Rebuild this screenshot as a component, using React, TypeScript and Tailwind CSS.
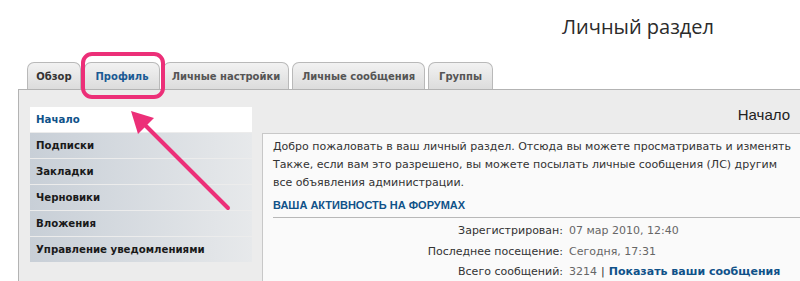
import React from "react";

const tabs = [
  { label: "Обзор", w: "w-[54px]", tone: "text-[#333333]" },
  { label: "Профиль", w: "w-[76px]", tone: "text-[#1b5a94]" },
  { label: "Личные настройки", w: "w-[126px]", tone: "text-[#555555]" },
  { label: "Личные сообщения", w: "w-[133px]", tone: "text-[#555555]" },
  { label: "Группы", w: "w-[65px]", tone: "text-[#555555]" },
];

const menu = ["Подписки", "Закладки", "Черновики", "Вложения", "Управление уведомлениями"];

const stats = [
  { k: "Зарегистрирован:", v: "07 мар 2010, 12:40" },
  { k: "Последнее посещение:", v: "Сегодня, 17:31" },
];

const App = () => {
  return (
    <div className="relative w-[800px] h-[281px] overflow-hidden bg-white font-['DejaVu_Sans',sans-serif]">
      <div className="flex justify-end pr-[86px] pt-[13px] h-[62px]">
        <h1 className="font-['Open_Sans',sans-serif] text-[20px] leading-[28px] text-[#2b2b2b]">
          Личный раздел
        </h1>
      </div>

      <div className="flex gap-[3px] pl-[27px] h-[27px]">
        {tabs.map((t) => (
          <div
            key={t.label}
            className={`${t.w} ${t.tone} flex items-center justify-center rounded-t-[7px] border border-b-0 border-[#b9b9b9] bg-gradient-to-b from-[#f2f2f2] to-[#dcdcdc] text-[10px] font-bold`}
          >
            {t.label}
          </div>
        ))}
      </div>

      <div className="ml-[18px] flex h-[192px] border-t border-l border-[#b3b3b3] bg-[#ececec]">
        <div className="w-[233px] shrink-0 pl-[11px] pt-[17px]">
          <div className="flex h-[25px] items-center bg-white pl-[6px] text-[10.2px] font-bold text-[#105289]">
            Начало
          </div>
          {menu.map((m) => (
            <div
              key={m}
              className="mt-px flex h-[25px] items-center bg-gradient-to-r from-[#c8cfd7] to-[#e7e9eb] pl-[6px] text-[10.2px] font-bold text-[#1a1a1a]"
            >
              {m}
            </div>
          ))}
        </div>

        <div className="ml-[10px] flex min-w-0 flex-1 flex-col">
          <div className="flex h-[43px] shrink-0 justify-end pr-[10px] pt-[16px] font-['Liberation_Sans',sans-serif] text-[15px] leading-[18px] text-[#222222]">
            Начало
          </div>
          <div className="flex-1 overflow-hidden border-t border-l border-[#c8c8c8] bg-[#fafafa] pl-[10px] pt-[4px] text-[11px] text-[#333333]">
            <p className="whitespace-nowrap leading-[18px]">
              Добро пожаловать в ваш личный раздел. Отсюда вы можете просматривать и изменять
              <br />
              Также, если вам это разрешено, вы можете посылать личные сообщения (ЛС) другим
              <br />
              все объявления администрации.
            </p>
            <div className="mt-[6px] border-b border-[#b8b8b8] pb-[5px] font-['Liberation_Sans',sans-serif] text-[11px] font-bold leading-[14px] text-[#105289]">
              ВАША АКТИВНОСТЬ НА ФОРУМАХ
            </div>
            <div className="mt-[3px] flex flex-col">
              {stats.map((s) => (
                <div key={s.k} className="flex h-[20.5px] items-center whitespace-nowrap">
                  <span className="w-[296px] shrink-0 pr-[6px] text-right">{s.k}</span>
                  <span className="text-[#666666]">{s.v}</span>
                </div>
              ))}
              <div className="flex h-[20.5px] items-center whitespace-nowrap">
                <span className="w-[296px] shrink-0 pr-[6px] text-right">Всего сообщений:</span>
                <span className="text-[#666666]">3214</span>
                <span className="px-[4px] text-[#333333]">|</span>
                <span className="font-bold text-[#105289]">Показать ваши сообщения</span>
              </div>
            </div>
          </div>
        </div>
      </div>

      <svg className="pointer-events-none absolute left-0 top-0" width="800" height="281">
        <rect x="83" y="54" width="80" height="43" rx="9" fill="none" stroke="#ec2f78" strokeWidth="4" />
        <line x1="228" y1="208" x2="146" y2="126" stroke="#ec2f78" strokeWidth="4" strokeLinecap="round" />
        <polygon points="131,111 154,118 138,134" fill="#ec2f78" />
      </svg>
    </div>
  );
};

export default App;
